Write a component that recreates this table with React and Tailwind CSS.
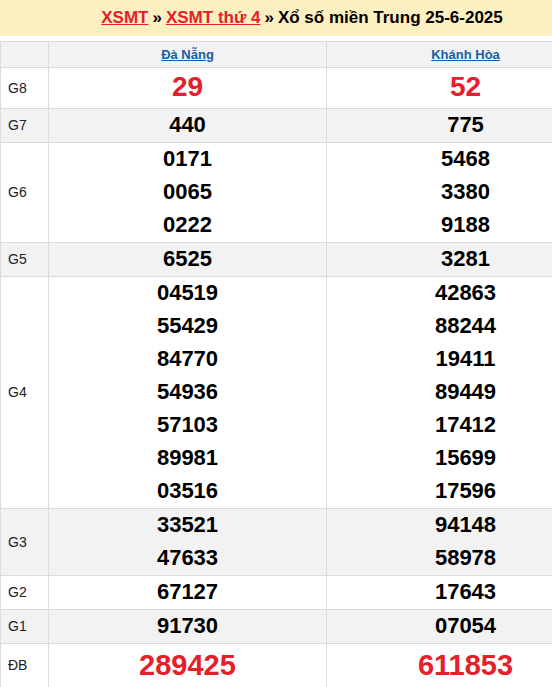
import React from 'react';

const rows = [
  { label: 'G8', a: ['29'], b: ['52'], big: true, h: 'h-[40px]' },
  { label: 'G7', a: ['440'], b: ['775'], gray: true },
  { label: 'G6', a: ['0171', '0065', '0222'], b: ['5468', '3380', '9188'] },
  { label: 'G5', a: ['6525'], b: ['3281'], gray: true },
  {
    label: 'G4',
    a: ['04519', '55429', '84770', '54936', '57103', '89981', '03516'],
    b: ['42863', '88244', '19411', '89449', '17412', '15699', '17596'],
  },
  { label: 'G3', a: ['33521', '47633'], b: ['94148', '58978'], gray: true },
  { label: 'G2', a: ['67127'], b: ['17643'] },
  { label: 'G1', a: ['91730'], b: ['07054'], gray: true },
  { label: 'ĐB', a: ['289425'], b: ['611853'], big: true, db: true, h: 'h-[44px]' },
];

const Nums = ({ list, big, db }) => (
  <div className="flex flex-col items-center -translate-y-px">
    {list.map((n) => (
      <span
        key={n}
        className={
          big
            ? `font-bold text-[#e5202a] leading-[40px] ${db ? 'text-[29px]' : 'text-[28px]'}`
            : 'font-bold text-[22px] leading-[33px] text-black'
        }
      >
        {n}
      </span>
    ))}
  </div>
);

export default function App() {
  return (
    <div className="w-[552px] overflow-hidden bg-white" style={{ fontFamily: '"Liberation Sans", Arial, sans-serif' }}>
      <div className="w-[604px]">
        <div className="h-[36px] bg-[#fcefc0] flex items-center justify-center text-[17px] font-bold text-black">
          <a className="text-[#e5202a] underline">XSMT</a>
          <span className="mx-1">»</span>
          <a className="text-[#e5202a] underline">XSMT thứ 4</a>
          <span className="mx-1">»</span>
          <span>Xổ số miền Trung 25-6-2025</span>
        </div>
        <table className="mt-[5px] w-[604px] border-collapse table-fixed">
          <colgroup>
            <col className="w-[48px]" />
            <col className="w-[278px]" />
            <col className="w-[278px]" />
          </colgroup>
          <thead>
            <tr className="h-[26px] bg-[#f2f2f2]">
              <th className="border border-[#dcdcdc]"></th>
              <th className="border border-[#dcdcdc] text-[13px] font-bold text-[#1a5ca8] underline">Đà Nẵng</th>
              <th className="border border-[#dcdcdc] text-[13px] font-bold text-[#1a5ca8] underline">Khánh Hòa</th>
            </tr>
          </thead>
          <tbody>
            {rows.map((r) => (
              <tr key={r.label} className={`${r.gray ? 'bg-[#f2f2f2]' : 'bg-white'} ${r.h || ''}`}>
                <td className="border border-[#dcdcdc] pl-[7px] text-[14px] text-[#222]">{r.label}</td>
                <td className="border border-[#dcdcdc] p-0">
                  <Nums list={r.a} big={r.big} db={r.db} />
                </td>
                <td className="border border-[#dcdcdc] p-0">
                  <Nums list={r.b} big={r.big} db={r.db} />
                </td>
              </tr>
            ))}
          </tbody>
        </table>
      </div>
    </div>
  );
}
